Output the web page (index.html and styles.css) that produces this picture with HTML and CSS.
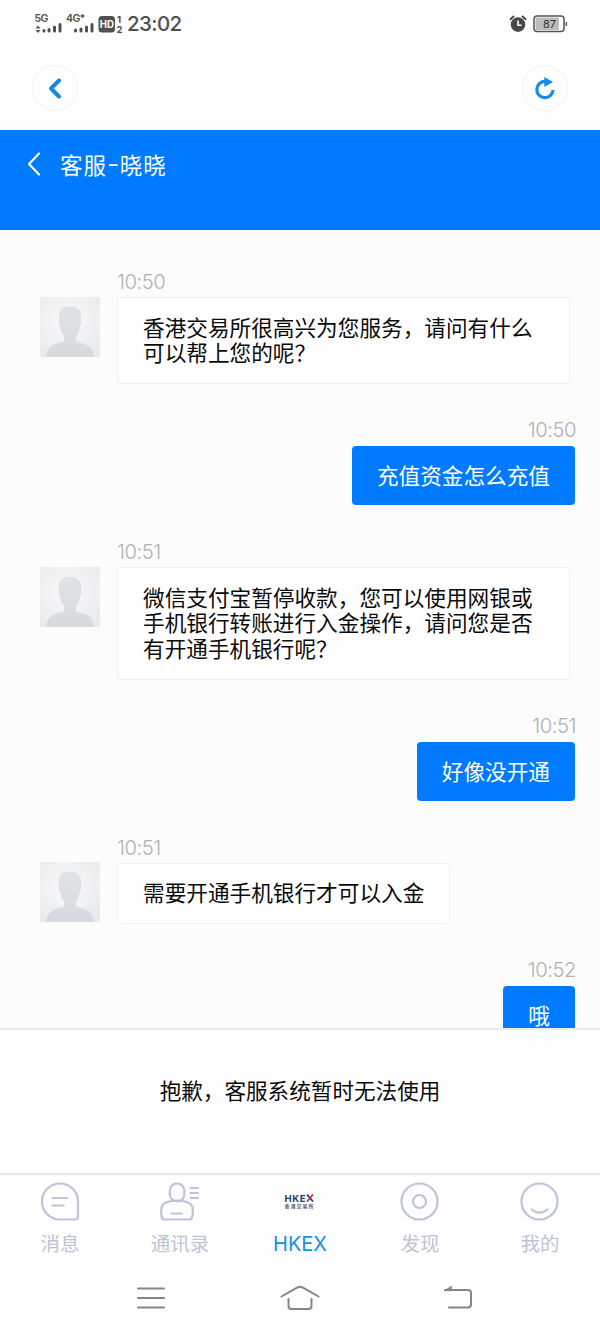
FILE: index.html
```html
<!DOCTYPE html>
<html lang="zh-CN">
<head>
<meta charset="utf-8">
<title>客服-晓晓</title>
<link rel="stylesheet" href="styles.css">
</head>
<body>
<div class="screen">
  <div class="status">
    <svg class="signals" width="88" height="24" viewBox="0 0 88 24" fill="#505050">
      <text x="-0.500" y="10" class="net">5G</text>
      <path d="M0.5 16.500 3 13.500 5.500 16.500ZM0.500 18 3 21 5.500 18Z"/>
      <g stroke="#505050" stroke-width="3" stroke-linecap="round">
        <path d="M9 18.500V19M14 17.500V19M19.500 15V19M25 12.500V19M40.500 18V19M46 17V19M51.500 15V19M57 12.500V19"/>
      </g>
      <text x="31" y="10" class="net">4G</text>
      <path d="M47.500 2V6M45.500 4H49.500" stroke="#505050" stroke-width="1.400"/>
      <rect x="63.500" y="4" width="16.500" height="16.500" rx="3.500"/>
      <text x="64.700" y="16" class="hd">HD</text>
      <text x="82" y="11" class="sim">1</text>
      <text x="81.500" y="20.500" class="sim">2</text>
    </svg>
    <span class="clock">23:02</span>
    <svg class="alarm" width="18" height="18" viewBox="0 0 18 18">
      <circle cx="9" cy="9.600" r="7.300" fill="#484848"/>
      <path d="M1.500 4.200 4.500 1.500M16.500 4.200 13.500 1.500" stroke="#484848" stroke-width="2" stroke-linecap="round"/>
      <path d="M9 5.500V10.200H12.500" fill="none" stroke="#fff" stroke-width="1.600"/>
    </svg>
    <svg width="35" height="18" viewBox="0 0 35 18">
      <rect x="1" y="1" width="30" height="15.500" rx="3" fill="#fff" stroke="#555" stroke-width="1.500"/>
      <rect x="2.500" y="2.500" width="23.500" height="12.500" rx="1" fill="#bcbcbc"/>
      <path d="M33.300 7V11" stroke="#666" stroke-width="1.600"/>
      <text x="10" y="12.600" class="level">87</text>
    </svg>
  </div>

  <div class="toolbar">
    <div class="round"><svg width="46" height="46" viewBox="0 0 46 46"><path d="M27 15.500 19 23.500 27 31.500" fill="none" stroke="#1488e2" stroke-width="4" stroke-linecap="round" stroke-linejoin="round"/></svg></div>
    <div class="round"><svg width="46" height="46" viewBox="0 0 46 46"><path d="M23.500 16.500A8.100 8.100 0 1 0 31 25" fill="none" stroke="#148cea" stroke-width="3.200"/><path d="M22.300 12 31 17 22.300 22Z" fill="#148cea"/></svg></div>
  </div>

  <header class="header">
    <svg width="14" height="26" viewBox="0 0 14 26"><path d="M12 2.500 2 13 12 23.500" fill="none" stroke="#fff" stroke-width="2.200" stroke-linecap="round" stroke-linejoin="round"/></svg>
    <div class="title">客服<span class="dash">-</span>晓晓</div>
  </header>

  <svg class="defs" width="0" height="0">
    <defs>
      <radialGradient id="photo" cx="45%" cy="40%" r="75%"><stop offset="0" stop-color="#f8f9fa"/><stop offset="1" stop-color="#e7eaec"/></radialGradient>
      <linearGradient id="body" x1="0" y1="0" x2="0" y2="1"><stop offset="0" stop-color="#e0e3e6"/><stop offset="1" stop-color="#d6dade"/></linearGradient>
      <symbol id="avatar" viewBox="0 0 60 60">
        <rect width="60" height="60" fill="url(#photo)"/>
        <path fill="url(#body)" d="M6 60C7 52 10 49 15 47L24 44.500V39C21.500 36 20.500 33 20 29.500 18.500 28 18.300 25.500 19 24 18 14 21 9.500 29 9.500 38 9.500 42 13 41 24 41.700 26 41.300 28 40 29.500 39.500 33 38 37 36 39.500V44.500L46 47.500C51 49.500 53 53 54 60Z"/>
      </symbol>
    </defs>
  </svg>

  <main class="chat">
    <div class="msg">
      <svg class="avatar"><use href="#avatar"/></svg>
      <div class="content"><time>10:50</time><p class="bubble wide">香港交易所很高兴为您服务，请问有什么<br>可以帮上您的呢？</p></div>
    </div>
    <div class="msg own"><div class="content"><time>10:50</time><p class="bubble">充值资金怎么充值</p></div></div>
    <div class="msg">
      <svg class="avatar"><use href="#avatar"/></svg>
      <div class="content"><time>10:51</time><p class="bubble wide">微信支付宝暂停收款，您可以使用网银或<br>手机银行转账进行入金操作，请问您是否<br>有开通手机银行呢？</p></div>
    </div>
    <div class="msg own"><div class="content"><time>10:51</time><p class="bubble">好像没开通</p></div></div>
    <div class="msg">
      <svg class="avatar"><use href="#avatar"/></svg>
      <div class="content"><time>10:51</time><p class="bubble">需要开通手机银行才可以入金</p></div>
    </div>
    <div class="msg own"><div class="content"><time>10:52</time><p class="bubble">哦</p></div></div>
  </main>

  <div class="notice">抱歉，客服系统暂时无法使用</div>

  <nav class="tabs">
    <div class="tab">
      <svg width="44" height="42" viewBox="0 0 44 42" class="line"><path d="M22 2.500A18 18 0 0 0 22 38.500H37Q40 38.500 40 35.500V20.500A18 18 0 0 0 22 2.500ZM14.500 17H29M14.500 24.500H25.500"/></svg>
      <span>消息</span>
    </div>
    <div class="tab">
      <svg width="44" height="42" viewBox="0 0 44 42" class="line"><rect x="11.800" y="2.500" width="14.600" height="18" rx="7.200"/><path d="M13.500 20Q6 21 3.800 25.500Q2.500 30 3.500 35Q4 38.500 7 38.500H31Q34 38.500 34.500 35Q35.500 30 34.400 25.500Q32 21 24.500 20Q19 19.200 13.500 20M13.500 32.500H24M32.500 7H40M32.500 12H40M32.500 17H40"/></svg>
      <span>通讯录</span>
    </div>
    <div class="tab active">
      <svg width="44" height="42" viewBox="0 0 44 42">
        <text x="6.500" y="20.500" class="brand" fill="#203d66" textLength="21">HKE</text>
        <path d="M29 13.500 35 20.500" stroke="#203d66" stroke-width="1.800"/>
        <path d="M35 13.500 29 20.500" stroke="#d02248" stroke-width="1.800"/>
        <text x="6.500" y="27" class="brand-sub" fill="#4b6078" textLength="29">香港交易所</text>
      </svg>
      <span>HKEX</span>
    </div>
    <div class="tab">
      <svg width="44" height="42" viewBox="0 0 44 42" class="line"><circle cx="21.500" cy="20.500" r="18"/><circle cx="21.500" cy="20.500" r="6.500"/></svg>
      <span>发现</span>
    </div>
    <div class="tab">
      <svg width="44" height="42" viewBox="0 0 44 42" class="line"><circle cx="21.500" cy="20.500" r="18"/><path d="M13.500 28.500Q21.500 35 29.500 28.500"/></svg>
      <span>我的</span>
    </div>
  </nav>

  <div class="system">
    <svg width="30" height="26" viewBox="0 0 30 26"><path d="M2 3.500H28M2 13H28M2 22.500H28"/></svg>
    <svg class="home" width="40" height="26" viewBox="0 0 40 26"><path d="M1.500 11.500 17.500 2.500Q20 1.200 22.500 2.500L38.500 11.500M8.500 14V21Q8.500 24 11.500 24H28.500Q31.500 24 31.500 21V14"/></svg>
    <svg width="30" height="26" viewBox="0 0 30 26"><path d="M2 5H25Q28 5 28 8V19.500Q28 22.500 25 22.500H6"/><path d="M1.500 5.500 8.500 1V5.500Z" class="tip"/></svg>
  </div>
</div>
</body>
</html>
```
FILE: styles.css
```css
* { box-sizing: border-box; }
body { margin: 0; background: #fff; font-family: Inter, "Noto Sans CJK SC", sans-serif; }
.screen { position: relative; width: 600px; height: 1333px; display: flex; flex-direction: column; background: #fefefe; overflow: hidden; }
.defs { position: absolute; }

.status { height: 47px; flex: none; display: flex; align-items: center; padding: 0 32px 0 35px; }
.signals { flex: none; overflow: visible; }
.net { font: 600 10.500px Inter, sans-serif; letter-spacing: -0.500px; }
.hd { font: 700 9.700px Inter, sans-serif; fill: #fff; }
.sim { font: 700 9.500px Inter, sans-serif; }
.level { font: 11px Inter, sans-serif; fill: #333; }
.clock { font: 500 20.500px/24px Inter, sans-serif; color: #505050; margin-left: 4px; letter-spacing: -0.600px; }
.alarm { margin-left: auto; margin-right: 6px; }

.toolbar { height: 83px; flex: none; display: flex; justify-content: space-between; padding: 18px 32px 0; }
.round { width: 46px; height: 46px; border-radius: 50%; box-shadow: inset 0 0 0 1px #f3f3f3; }
.round svg { display: block; }

.header { height: 100px; flex: none; display: flex; align-items: flex-start; gap: 19px; padding: 21px 27px; background: #007bff; color: #fff; }
.header svg { flex: none; }
.title { display: flex; font-family: "Noto Sans CJK SC", sans-serif; font-size: 22.500px; line-height: 26px; letter-spacing: 1.100px; }
.dash { width: 12.500px; text-align: center; font-family: Inter, sans-serif; letter-spacing: 0; transform: scaleX(1.150); }

.chat { height: 798px; flex: none; overflow: hidden; display: flex; flex-direction: column; gap: 35px; padding: 40px 25px 0 40px; background: #fcfcfc; }
.msg { display: flex; gap: 17px; flex: none; }
.msg.own { justify-content: flex-end; }
.avatar { width: 60px; height: 60px; margin-top: 26.500px; flex: none; }
.content { display: flex; flex-direction: column; align-items: flex-start; gap: 3px; }
.content time { color: #b1b1b1; font: 300 20.300px/24px Inter, sans-serif; letter-spacing: -0.500px; }
.bubble { margin: 0; padding: 15.500px 25px 18px; border: 1.500px solid #f0f0f0; border-radius: 4px; background: #fff; color: #0a0a0a; font-family: "Noto Sans CJK SC", sans-serif; font-size: 21.650px; line-height: 25.700px; white-space: nowrap; }
.bubble.wide { width: 453px; }
.own .content { align-items: flex-end; gap: 4px; margin-top: -1px; }
.own time { margin-right: -1px; }
.own .bubble { border: 0; padding: 16px 25px 17.500px; background: #007bff; color: #fff; }

.notice { height: 145px; flex: none; display: flex; align-items: center; justify-content: center; padding-bottom: 24px; border-top: 2px solid #ececec; font-family: "Noto Sans CJK SC", sans-serif; font-size: 21.600px; color: #0a0a0a; }

.tabs { height: 92px; flex: none; display: grid; grid-template-columns: repeat(5, 1fr); border-top: 2px solid #e8e8e8; }
.tab { display: flex; flex-direction: column; align-items: center; padding-top: 6px; color: #bcc4d6; font-size: 19.500px; line-height: 28px; gap: 6.500px; }
.tab svg { flex: none; }
.line { fill: none; stroke: #bcc4d6; stroke-width: 2.200; stroke-linecap: round; }
.active { color: #1690e8; font-size: 20px; }
.brand { font: 700 9.500px Inter, sans-serif; }
.brand-sub { font: 700 5px "Noto Sans CJK SC", sans-serif; }

.system { flex: 1; display: flex; justify-content: space-between; align-items: flex-start; padding: 20px 127px 0 136px; }
.home { margin-left: -9px; }
.system path { fill: none; stroke: #858585; stroke-width: 2; stroke-linecap: round; }
.system .tip { fill: #858585; stroke-width: 0.500; }
```
